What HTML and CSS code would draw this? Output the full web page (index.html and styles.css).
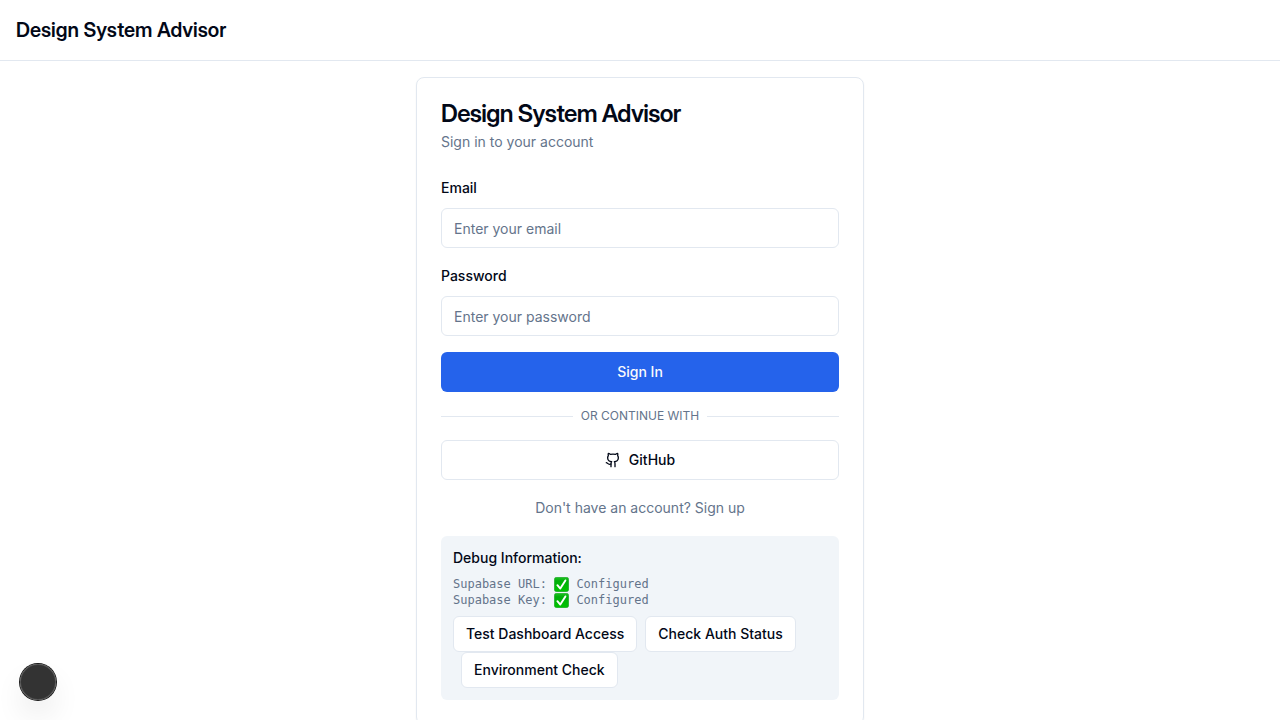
FILE: index.html
```html
<!DOCTYPE html>
<html lang="en">
<head>
<meta charset="utf-8">
<meta name="viewport" content="width=device-width, initial-scale=1">
<title>Design System Advisor</title>
<link rel="stylesheet" href="styles.css">
</head>
<body>
<svg class="symbols" width="0" height="0" aria-hidden="true">
  <defs>
    <linearGradient id="check-fill" x1="0" y1="0" x2="0" y2="1">
      <stop offset="0" stop-color="#1fc41f"/>
      <stop offset="0.25" stop-color="#00ae0a"/>
      <stop offset="1" stop-color="#00c400"/>
    </linearGradient>
    <symbol id="check" viewBox="0 0 15 15">
      <rect x="0.3" y="0.3" width="14.4" height="14.4" rx="2.4" fill="url(#check-fill)" stroke="#1a9e28" stroke-width="0.6"/>
      <path d="M3.4 8.2 6.3 11.6 11.4 3.4" fill="none" stroke="#fff" stroke-width="1.9" stroke-linecap="round" stroke-linejoin="round"/>
    </symbol>
  </defs>
</svg>
<header class="site-header">
  <h1 class="site-title">Design System Advisor</h1>
</header>
<main class="page">
  <section class="card">
    <div class="card-header">
      <h2 class="card-title">Design System Advisor</h2>
      <p class="card-description">Sign in to your account</p>
    </div>
    <form class="form">
      <div class="field">
        <label class="label" for="email">Email</label>
        <input class="input" id="email" type="email" placeholder="Enter your email">
      </div>
      <div class="field">
        <label class="label" for="password">Password</label>
        <input class="input" id="password" type="password" placeholder="Enter your password">
      </div>
      <button class="button button-primary" type="submit">Sign In</button>
      <div class="divider"><span>Or continue with</span></div>
      <button class="button button-outline" type="button">
        <svg class="icon" viewBox="0 0 24 24" aria-hidden="true">
          <path d="M15 22v-4a4.8 4.8 0 0 0-1-3.5c3 0 6-2 6-5.5.08-1.25-.27-2.48-1-3.5.28-1.15.28-2.35 0-3.5 0 0-1 0-3 1.5-2.64-.5-5.36-.5-8 0C6 2 5 2 5 2c-.3 1.15-.3 2.35 0 3.5A5.403 5.403 0 0 0 4 9c0 3.5 3 5.5 6 5.5-.39.49-.68 1.05-.85 1.65-.17.6-.22 1.23-.15 1.85v4"/>
          <path d="M9 18c-4.51 2-5-2-7-2"/>
        </svg>
        GitHub
      </button>
      <p class="signup"><a class="signup-link" href="#">Don't have an account? Sign up</a></p>
    </form>
    <section class="debug">
      <h3 class="debug-title">Debug Information:</h3>
      <div class="debug-status">
        <div>Supabase URL: <svg class="check" role="img" aria-label="Yes"><use href="#check"/></svg> Configured</div>
        <div>Supabase Key: <svg class="check" role="img" aria-label="Yes"><use href="#check"/></svg> Configured</div>
      </div>
      <div class="debug-actions">
        <button class="button button-outline button-small" type="button">Test Dashboard Access</button>
        <button class="button button-outline button-small button-next" type="button">Check Auth Status</button>
        <button class="button button-outline button-small button-next" type="button">Environment Check</button>
      </div>
    </section>
  </section>
</main>
<button class="dev-badge" type="button" aria-label="Open developer tools"></button>
</body>
</html>
```
FILE: styles.css
```css
:root {
  --foreground: #020817;
  --muted: #64748b;
  --border: #e2e8f0;
  --surface: #f1f5f9;
  --primary: #2563eb;
}

*, *::before, *::after {
  box-sizing: border-box;
}

html {
  scrollbar-width: none;
}

body {
  margin: 0;
  background: #fff;
  color: var(--foreground);
  font-family: Inter, "Liberation Sans", sans-serif;
  font-size: 16px;
  line-height: 24px;
}

h1, h2, h3, p {
  margin: 0;
}

button, input {
  font: inherit;
  color: inherit;
}

.symbols {
  position: absolute;
}

.site-header {
  padding: 16px;
  border-bottom: 1px solid var(--border);
}

.site-title,
.card-title {
  font-family: "Inter Display", Inter, "Liberation Sans", sans-serif;
  font-weight: 600;
}

.site-title {
  font-size: 20px;
  line-height: 28px;
}

.page {
  display: flex;
  justify-content: center;
  padding: 16px;
}

.card {
  width: 100%;
  max-width: 448px;
  padding: 24px;
  border: 1px solid var(--border);
  border-radius: 8px;
  box-shadow: 0 1px 2px rgba(0, 0, 0, 0.05);
}

.card-header {
  display: flex;
  flex-direction: column;
  gap: 6px;
  margin-bottom: 24px;
}

.card-title {
  font-size: 24px;
  line-height: 24px;
  letter-spacing: -0.025em;
}

.card-description {
  color: var(--muted);
  font-size: 14px;
  line-height: 20px;
}

.form {
  display: flex;
  flex-direction: column;
  gap: 16px;
}

.field {
  display: flex;
  flex-direction: column;
  gap: 8px;
}

.label {
  font-size: 14px;
  font-weight: 500;
  line-height: 24px;
}

.input {
  width: 100%;
  height: 40px;
  padding: 8px 12px;
  border: 1px solid var(--border);
  border-radius: 6px;
  background: #fff;
  font-size: 14px;
  line-height: 20px;
}

.input::placeholder {
  color: var(--muted);
  opacity: 1;
}

.button {
  display: inline-flex;
  align-items: center;
  justify-content: center;
  gap: 8px;
  height: 40px;
  padding: 0 16px;
  border: 0;
  border-radius: 6px;
  font-size: 14px;
  font-weight: 500;
  line-height: 20px;
  white-space: nowrap;
  cursor: pointer;
}

.button-primary {
  background: var(--primary);
  color: #f8fafc;
}

.button-outline {
  border: 1px solid var(--border);
  background: #fff;
}

.button-small {
  height: 36px;
  padding: 0 12px;
}

.button-next {
  margin-left: 8px;
}

.icon {
  width: 16px;
  height: 16px;
  fill: none;
  stroke: currentColor;
  stroke-width: 2;
  stroke-linecap: round;
  stroke-linejoin: round;
}

.divider {
  display: flex;
  align-items: center;
  gap: 8px;
  color: var(--muted);
  font-size: 12px;
  line-height: 16px;
  text-transform: uppercase;
}

.divider::before,
.divider::after {
  content: "";
  flex: 1;
  height: 1px;
  background: var(--border);
}

.signup {
  font-size: 14px;
  text-align: center;
}

.signup-link {
  color: var(--muted);
  text-decoration: none;
}

.debug {
  margin-top: 16px;
  padding: 12px;
  border-radius: 6px;
  background: var(--surface);
}

.debug-title {
  margin-bottom: 8px;
  font-size: 14px;
  font-weight: 500;
  line-height: 20px;
}

.debug-status {
  margin-bottom: 8px;
  color: var(--muted);
  font-family: "DejaVu Sans Mono", monospace;
  font-size: 12px;
  line-height: 16px;
}

.check {
  width: 15px;
  height: 15px;
  vertical-align: bottom;
}

.debug-actions {
  display: flex;
  flex-wrap: wrap;
}

.dev-badge {
  position: fixed;
  bottom: 20px;
  left: 20px;
  width: 36px;
  height: 36px;
  padding: 0;
  border: 0;
  border-radius: 50%;
  background: rgba(0, 0, 0, 0.8);
  box-shadow: 0 0 0 1px #171717, inset 0 0 0 1px rgba(255, 255, 255, 0.14), 0 16px 32px -8px rgba(0, 0, 0, 0.24);
}
```
